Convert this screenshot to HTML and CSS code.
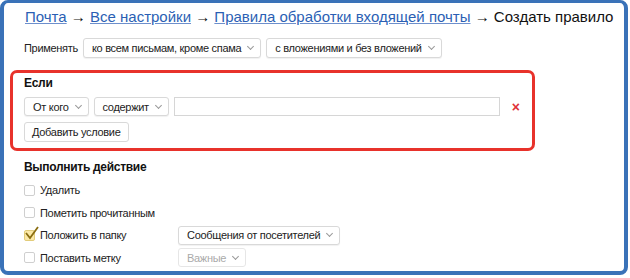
FILE: index.html
```html
<!DOCTYPE html>
<html lang="ru">
<head>
    <meta charset="UTF-8">
    <title>Создать правило</title>
    <link rel="stylesheet" href="styles.css">
</head>
<body>
    <div class="frame">
        <div class="crumbs">
            <a href="#">Почта</a> → <a href="#">Все настройки</a> → <a href="#">Правила обработки входящей почты</a> → Создать правило
        </div>

        <div class="apply-row">
            <span class="label">Применять</span>
            <span class="select">ко всем письмам, кроме спама <i class="chev"></i></span>
            <span class="select">с вложениями и без вложений <i class="chev"></i></span>
        </div>

        <div class="if-box">
            <div class="title">Если</div>
            <div class="cond-row">
                <span class="select">От кого <i class="chev"></i></span>
                <span class="select">содержит <i class="chev"></i></span>
                <span class="field"></span>
                <span class="remove">×</span>
            </div>
            <span class="button">Добавить условие</span>
        </div>

        <div class="actions">
            <div class="title">Выполнить действие</div>
            <div class="action">
                <span class="check"></span><span class="name">Удалить</span>
            </div>
            <div class="action">
                <span class="check"></span><span class="name">Пометить прочитанным</span>
            </div>
            <div class="action">
                <span class="check checked">
                    <svg width="16" height="14" viewBox="0 0 16 14"><path d="M2 7 L6 12 L14 1" fill="none" stroke="#8a6d10" stroke-width="1.8"/></svg>
                </span><span class="name">Положить в папку</span>
                <span class="select">Сообщения от посетителей <i class="chev"></i></span>
            </div>
            <div class="action">
                <span class="check"></span><span class="name">Поставить метку</span>
                <span class="select disabled">Важные <i class="chev"></i></span>
            </div>
        </div>
    </div>
</body>
</html>
```

FILE: styles.css
```css
body {
    margin: 0;
    background: #fff;
    font-family: "Liberation Sans", Arial, sans-serif;
    color: #222;
}

.frame {
    box-sizing: border-box;
    width: 628px;
    height: 275px;
    border: 4px solid #3a72b8;
    border-top-width: 3px;
    border-radius: 8px;
    padding: 0 0 0 20px;
    overflow: hidden;
}

.crumbs {
    font-size: 15px;
    line-height: 20px;
    margin: 4px 0 0 1px;
    color: #111;
    white-space: nowrap;
}

.crumbs a {
    color: #2b5fb4;
    text-decoration: underline;
    text-decoration-color: #6d8fcc;
}

.apply-row {
    display: flex;
    align-items: center;
    gap: 5px;
    margin-top: 11px;
    font-size: 11px;
    letter-spacing: -0.3px;
}

.select {
    box-sizing: border-box;
    display: inline-flex;
    align-items: center;
    height: 20px;
    padding: 0 7px 0 8px;
    border: 1px solid #d9d9d9;
    border-radius: 3px;
    background: #fff;
    box-shadow: 0 1px 1px rgba(0, 0, 0, 0.06);
    font-size: 11px;
    letter-spacing: -0.3px;
    color: #222;
    white-space: nowrap;
}

.chev {
    display: inline-block;
    width: 4px;
    height: 4px;
    border-right: 1px solid #999;
    border-bottom: 1px solid #999;
    transform: rotate(45deg);
    margin: -3px 0 0 7px;
}

.if-box {
    box-sizing: border-box;
    width: 525px;
    height: 81px;
    margin: 12px 0 0 -14px;
    border: 3px solid #e8322b;
    border-radius: 7px;
    padding: 2px 0 0 11px;
}

.title {
    font-size: 12px;
    font-weight: bold;
    line-height: 16px;
    letter-spacing: -0.3px;
    color: #111;
}

.cond-row {
    display: flex;
    align-items: center;
    gap: 5px;
    margin-top: 6px;
}

.cond-row .select {
    height: 19px;
}

.field {
    box-sizing: border-box;
    width: 326px;
    height: 19px;
    border: 1px solid #d6d6d6;
    background: #fff;
}

.remove {
    color: #e0323a;
    font-size: 14px;
    font-weight: bold;
    margin-left: 7px;
    line-height: 14px;
}

.button {
    box-sizing: border-box;
    display: inline-flex;
    align-items: center;
    height: 20px;
    margin-top: 6px;
    padding: 0 7px;
    border: 1px solid #d9d9d9;
    border-radius: 3px;
    font-size: 11px;
    letter-spacing: -0.3px;
    color: #222;
}

.actions {
    margin-top: 8px;
}

.actions .title {
    margin-bottom: 4px;
}

.action {
    display: flex;
    align-items: center;
    height: 22.5px;
    font-size: 11px;
    letter-spacing: -0.3px;
}

.check {
    box-sizing: border-box;
    position: relative;
    width: 11px;
    height: 11px;
    border: 1px solid #cfcfcf;
    border-radius: 2px;
    margin-right: 5px;
}

.check.checked {
    background: #fbe8a6;
    border-color: #e2cc7a;
}

.check svg {
    position: absolute;
    left: -1px;
    top: -5px;
}

.name {
    width: 138px;
}

.action .select {
    height: 19px;
}

.select.disabled {
    color: #aaa;
    box-shadow: none;
    border-color: #e6e6e6;
}
```
